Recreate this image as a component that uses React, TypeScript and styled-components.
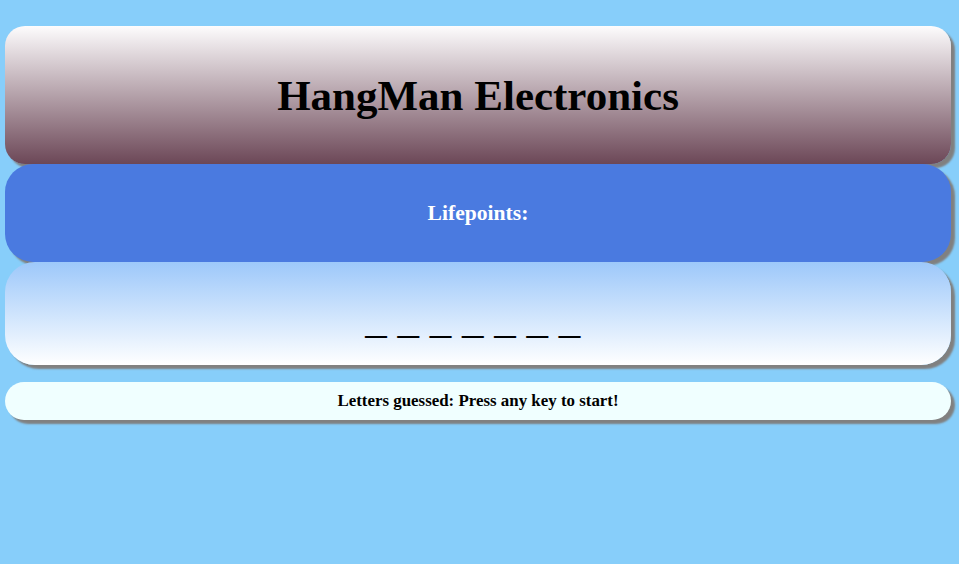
import React from "react";
import styled, { createGlobalStyle } from "styled-components";

const GlobalStyle = createGlobalStyle`
	html, body {
		margin: 0;
		padding: 0;
		background: #87cefa;
		font-family: "Liberation Serif", "Times New Roman", serif;
	}
`;

const Page = styled.div`
	padding: 26px 8px 40px 5px;
	display: flex;
	flex-direction: column;
`;

const Card = styled.div<{ $radius: number }>`
	border-radius: ${(p) => p.$radius}px;
	box-shadow: 4px 4px 2px #808080;
	display: flex;
	justify-content: center;
`;

const Header = styled(Card)`
	height: 138px;
	align-items: center;
	background: linear-gradient(to bottom, #fdfcfd, #6c4757);
`;

const Title = styled.h1`
	margin: 0;
	padding-top: 1px;
	font-size: 43px;
	font-weight: bold;
	color: #000;
`;

const Lives = styled(Card)`
	height: 98px;
	align-items: center;
	background: #4a7ae0;
`;

const LivesText = styled.h2`
	margin: 0;
	font-size: 21.6px;
	font-weight: bold;
	color: #fff;
`;

const Word = styled(Card)`
	height: 103px;
	align-items: flex-end;
	background: linear-gradient(to bottom, #9dc8fa, #ffffff);
`;

const Blanks = styled.div`
	font-size: 43px;
	line-height: 1;
	padding-bottom: 25px;
	color: #000;
	white-space: pre;
`;

const Guessed = styled(Card)`
	margin-top: 17px;
	height: 38px;
	align-items: center;
	background: #f0ffff;
`;

const GuessedText = styled.p`
	margin: 0;
	font-size: 16.9px;
	font-weight: bold;
	color: #000;
`;

export default function App() {
	const word = "_______";
	const blanks = word
		.split("")
		.map((c) => c + " ")
		.join("");
	return (
		<>
			<GlobalStyle />
			<Page>
				<Header $radius={20}>
					<Title>HangMan Electronics</Title>
				</Header>
				<Lives $radius={28}>
					<LivesText>Lifepoints:</LivesText>
				</Lives>
				<Word $radius={30}>
					<Blanks>{blanks}</Blanks>
				</Word>
				<Guessed $radius={19}>
					<GuessedText>Letters guessed: Press any key to start!</GuessedText>
				</Guessed>
			</Page>
		</>
	);
}
